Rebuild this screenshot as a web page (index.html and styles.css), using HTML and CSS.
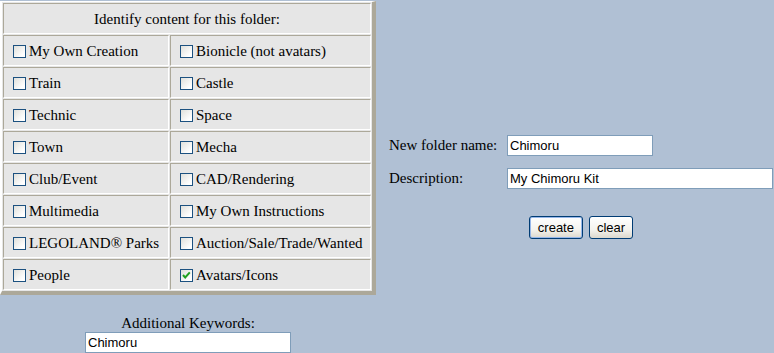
FILE: index.html
```html
<!DOCTYPE html>
<html lang="en">
<head>
  <meta charset="UTF-8" />
  <title>New Folder</title>
  <link rel="stylesheet" href="styles.css">
</head>
<body>

  <div class="layout">
    <table class="topics">
      <tr><th colspan="2">Identify content for this folder:</th></tr>
      <tr>
        <td><label><input type="checkbox">My Own Creation</label></td>
        <td><label><input type="checkbox">Bionicle (not avatars)</label></td>
      </tr>
      <tr>
        <td><label><input type="checkbox">Train</label></td>
        <td><label><input type="checkbox">Castle</label></td>
      </tr>
      <tr>
        <td><label><input type="checkbox">Technic</label></td>
        <td><label><input type="checkbox">Space</label></td>
      </tr>
      <tr>
        <td><label><input type="checkbox">Town</label></td>
        <td><label><input type="checkbox">Mecha</label></td>
      </tr>
      <tr>
        <td><label><input type="checkbox">Club/Event</label></td>
        <td><label><input type="checkbox">CAD/Rendering</label></td>
      </tr>
      <tr>
        <td><label><input type="checkbox">Multimedia</label></td>
        <td><label><input type="checkbox">My Own Instructions</label></td>
      </tr>
      <tr>
        <td><label><input type="checkbox">LEGOLAND® Parks</label></td>
        <td><label><input type="checkbox">Auction/Sale/Trade/Wanted</label></td>
      </tr>
      <tr>
        <td><label><input type="checkbox">People</label></td>
        <td><label><input type="checkbox" checked>Avatars/Icons</label></td>
      </tr>
    </table>

    <form class="folder">
      <label for="folderName">New folder name:</label>
      <input type="text" id="folderName" class="name" value="Chimoru">
      <label for="folderDesc">Description:</label>
      <input type="text" id="folderDesc" class="desc" value="My Chimoru Kit">
      <div class="buttons">
        <button type="submit" class="default">create</button>
        <button type="reset">clear</button>
      </div>
    </form>
  </div>

  <div class="keywords">
    <label for="keywords">Additional Keywords:</label>
    <input type="text" id="keywords" value="Chimoru">
  </div>

</body>
</html>
```

FILE: styles.css
```css
body {
  margin: 0;
  background-color: #b0c0d4;
  color: #000;
  font-family: "Liberation Serif", "Times New Roman", serif;
  font-size: 15px;
}

.layout {
  display: flex;
  align-items: flex-start;
}

/* content checkboxes */
.topics {
  margin-top: 1px;
  border-collapse: separate;
  border-spacing: 1px;
  background: #e6e6e6;
  border-style: solid;
  border-width: 1px 4px 4px 2px;
  border-color: #fff #aca899 #aca899 #fff;
}

.topics th,
.topics td {
  box-sizing: border-box;
  height: 31px;
  padding: 2px 5px 0;
  border: 1px solid;
  border-color: #aca899 #fff #fff #aca899;
  font-weight: normal;
  white-space: nowrap;
}

.topics td:first-child {
  width: 166px;
}

.topics td + td {
  width: 201px;
}

.topics label {
  display: flex;
  align-items: center;
}

.topics input[type=checkbox] {
  appearance: none;
  box-sizing: border-box;
  width: 13px;
  height: 13px;
  margin: 0 3px 0 4px;
  border: 1px solid #1c5180;
  background: linear-gradient(135deg, #e0e0db, #fff 80%);
}

.topics input[type=checkbox]:checked {
  background:
    url("data:image/svg+xml,%3Csvg xmlns='http://www.w3.org/2000/svg' width='11' height='11'%3E%3Cpath d='M2 5l2.2 2.4 4.6-5' fill='none' stroke='%2321a121' stroke-width='2'/%3E%3C/svg%3E") no-repeat,
    linear-gradient(135deg, #e0e0db, #fff 80%);
}

/* folder form */
.folder {
  margin: 135px 0 0 13px;
  display: grid;
  grid-template-columns: 118px auto;
  row-gap: 12px;
  align-items: center;
}

input[type=text] {
  box-sizing: border-box;
  height: 21px;
  padding: 0 2px;
  border: 1px solid #7f9db9;
  background: #fff;
  font-family: "Liberation Sans", Arial, sans-serif;
  font-size: 13px;
  color: #000;
}

.name {
  width: 146px;
}

.desc {
  width: 266px;
}

.buttons {
  grid-column: 1 / -1;
  display: flex;
  justify-content: center;
  gap: 6px;
  margin-top: 15px;
}

button {
  height: 23px;
  padding: 0 7px;
  border: 1px solid #003c74;
  border-radius: 3px;
  background: linear-gradient(#fff, #f4f3ee 60%, #dcd8cd);
  font-family: "Liberation Sans", Arial, sans-serif;
  font-size: 13px;
  color: #000;
}

button.default {
  padding: 0 8px;
  box-shadow: inset 0 0 0 1px #98b8ea;
}

/* keywords */
.keywords {
  width: 376px;
  margin-top: 20px;
  text-align: center;
}

.keywords label {
  display: block;
}

.keywords input {
  width: 206px;
}
```
